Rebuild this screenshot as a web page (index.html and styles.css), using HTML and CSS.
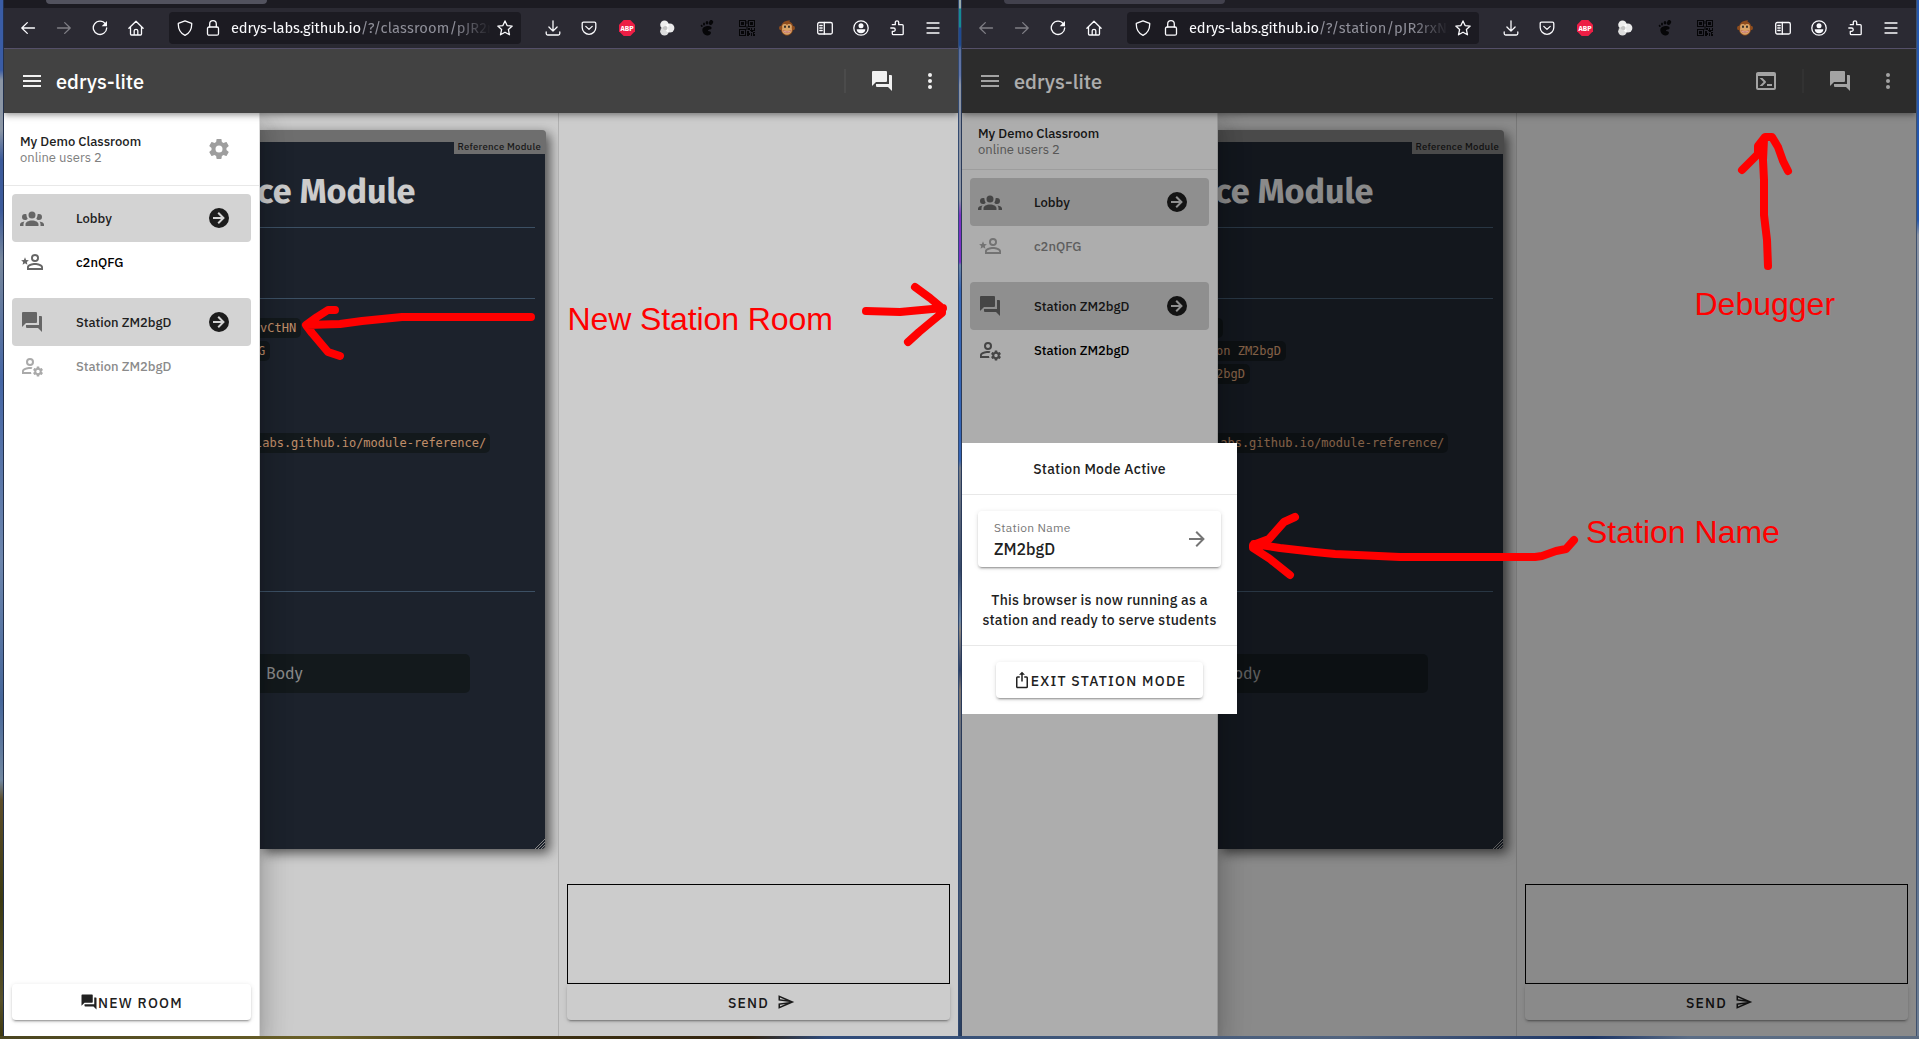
FILE: index.html
```html
<!DOCTYPE html>
<html lang="en">
<head>
<meta charset="utf-8">
<title>edrys-lite</title>
<link rel="stylesheet" href="styles.css">
</head>
<body>
<svg class="sprite" aria-hidden="true">
  <symbol id="menu" viewBox="0 0 24 24"><path d="M3,6H21V8H3V6M3,11H21V13H3V11M3,16H21V18H3V16Z"/></symbol>
  <symbol id="forum" viewBox="0 0 24 24"><path d="M17,12V3A1,1 0 0,0 16,2H3A1,1 0 0,0 2,3V17L6,13H16A1,1 0 0,0 17,12M21,6H19V15H6V17A1,1 0 0,0 7,18H18L22,22V7A1,1 0 0,0 21,6Z"/></symbol>
  <symbol id="dots" viewBox="0 0 24 24"><circle cx="12" cy="6" r="2"/><circle cx="12" cy="12" r="2"/><circle cx="12" cy="18" r="2"/></symbol>
  <symbol id="cog" viewBox="0 0 24 24"><path d="M12,15.5A3.5,3.5 0 0,1 8.5,12A3.5,3.5 0 0,1 12,8.5A3.5,3.5 0 0,1 15.5,12A3.5,3.5 0 0,1 12,15.5M19.43,12.97C19.47,12.65 19.5,12.33 19.5,12C19.5,11.67 19.47,11.34 19.43,11L21.54,9.37C21.73,9.22 21.78,8.95 21.66,8.73L19.66,5.27C19.54,5.05 19.27,4.96 19.05,5.05L16.56,6.05C16.04,5.66 15.5,5.32 14.87,5.07L14.5,2.42C14.46,2.18 14.25,2 14,2H10C9.75,2 9.54,2.18 9.5,2.42L9.13,5.07C8.5,5.32 7.96,5.66 7.44,6.05L4.95,5.05C4.73,4.96 4.46,5.05 4.34,5.27L2.34,8.73C2.21,8.95 2.27,9.22 2.46,9.37L4.57,11C4.53,11.34 4.5,11.67 4.5,12C4.5,12.33 4.53,12.65 4.57,12.97L2.46,14.63C2.27,14.78 2.21,15.05 2.34,15.27L4.34,18.73C4.46,18.95 4.73,19.03 4.95,18.95L7.44,17.94C7.96,18.34 8.5,18.68 9.13,18.93L9.5,21.58C9.54,21.82 9.75,22 10,22H14C14.25,22 14.46,21.82 14.5,21.58L14.87,18.93C15.5,18.67 16.04,18.34 16.56,17.94L19.05,18.95C19.27,19.03 19.54,18.95 19.66,18.73L21.66,15.27C21.78,15.05 21.73,14.78 21.54,14.63L19.43,12.97Z"/></symbol>
  <symbol id="group" viewBox="0 0 24 24"><path d="M12,5.5A3.5,3.5 0 0,1 15.5,9A3.5,3.5 0 0,1 12,12.5A3.5,3.5 0 0,1 8.5,9A3.5,3.5 0 0,1 12,5.5M5,8C5.56,8 6.08,8.15 6.53,8.42C6.38,9.85 6.8,11.27 7.66,12.38C7.16,13.34 6.16,14 5,14A3,3 0 0,1 2,11A3,3 0 0,1 5,8M19,8A3,3 0 0,1 22,11A3,3 0 0,1 19,14C17.84,14 16.84,13.34 16.34,12.38C17.2,11.27 17.62,9.85 17.47,8.42C17.92,8.15 18.44,8 19,8M5.5,18.25C5.5,16.18 8.41,14.5 12,14.5C15.59,14.5 18.5,16.18 18.5,18.25V20H5.5V18.25M0,20V18.5C0,17.11 1.89,15.94 4.45,15.6C3.86,16.28 3.5,17.22 3.5,18.25V20H0M24,20H20.5V18.25C20.5,17.22 20.14,16.28 19.55,15.6C22.11,15.94 24,17.11 24,18.5V20Z"/></symbol>
  <symbol id="go" viewBox="0 0 24 24"><path d="M22,12A10,10 0 0,1 12,22A10,10 0 0,1 2,12A10,10 0 0,1 12,2A10,10 0 0,1 22,12M6,13H14L10.5,16.5L11.92,17.92L17.84,12L11.92,6.08L10.5,7.5L14,11H6V13Z"/></symbol>
  <symbol id="userstar" viewBox="0 0 24 24"><path d="M15,4A4,4 0 0,0 11,8A4,4 0 0,0 15,12A4,4 0 0,0 19,8A4,4 0 0,0 15,4M15,5.9C16.16,5.9 17.1,6.84 17.1,8C17.1,9.16 16.16,10.1 15,10.1A2.1,2.1 0 0,1 12.9,8A2.1,2.1 0 0,1 15,5.9M15,13C12.33,13 7,14.33 7,17V20H23V17C23,14.33 17.67,13 15,13M15,14.9C17.97,14.9 21.1,16.36 21.1,17V18.1H8.9V17C8.9,16.36 12,14.9 15,14.9M5,13.3L7.4,14.8L6.8,12L8.9,10.2L6.1,9.9L5,7.3L3.9,9.9L1.1,10.2L3.2,12L2.6,14.8Z"/></symbol>
  <symbol id="usercog" viewBox="0 0 24 24"><path d="M10,4A4,4 0 0,0 6,8A4,4 0 0,0 10,12A4,4 0 0,0 14,8A4,4 0 0,0 10,4M10,6A2,2 0 0,1 12,8A2,2 0 0,1 10,10A2,2 0 0,1 8,8A2,2 0 0,1 10,6M10,13C7.33,13 2,14.33 2,17V20H11.5A6,6 0 0,1 11,18.1H3.9V17C3.9,16.36 7,14.9 10,14.9L11.6,15A6,6 0 0,1 12.5,13.3Z"/><use href="#cog" x="12" y="11.5" width="12" height="12"/></symbol>
  <symbol id="console" viewBox="0 0 24 24"><path d="M20,19V7H4V19H20M20,3A2,2 0 0,1 22,5V19A2,2 0 0,1 20,21H4A2,2 0 0,1 2,19V5C2,3.89 2.9,3 4,3H20M13,17V15H18V17H13M9.58,13L5.57,9H8.4L11.7,12.3C12.09,12.69 12.09,13.33 11.7,13.72L8.42,17H5.59L9.58,13Z"/></symbol>
  <symbol id="send" viewBox="0 0 24 24"><path d="M4 6.03L11.5 9.25L4 8.25V6.03M11.5 14.75L4 17.97V15.75L11.5 14.75M2 3V10L17 12L2 14V21L23 12L2 3Z"/></symbol>
  <symbol id="export" viewBox="0 0 24 24"><path d="M12,1L8,5H11V14H13V5H16M18,23H6C4.89,23 4,22.1 4,21V9A2,2 0 0,1 6,7H9V9H6V21H18V9H15V7H18A2,2 0 0,1 20,9V21A2,2 0 0,1 18,23Z"/></symbol>
  <symbol id="arrow" viewBox="0 0 24 24"><path d="M4,11V13H16L10.5,18.5L11.92,19.92L19.84,12L11.92,4.08L10.5,5.5L16,11H4Z"/></symbol>

  <symbol id="b-back" viewBox="0 0 16 16"><path class="ln" d="M14.5 8H2M7.3 2.6L1.8 8l5.5 5.4"/></symbol>
  <symbol id="b-fwd" viewBox="0 0 16 16"><path class="ln" d="M1.5 8H14M8.7 2.6L14.2 8l-5.5 5.4"/></symbol>
  <symbol id="b-reload" viewBox="0 0 16 16"><path class="ln" d="M13.4 3.8A6.7 6.7 0 1 0 14.7 8"/><path d="M15 1v5.3H9.7z"/></symbol>
  <symbol id="b-home" viewBox="0 0 16 16"><path class="ln" d="M.9 8.3L8 1.3l7.1 7M2.5 7v7c0 .6.4 1 1 1h9c.6 0 1-.4 1-1V7M6.2 15v-4.2c0-1 .6-1.500 1.800-1.500s1.800.5 1.800 1.500V15"/></symbol>
  <symbol id="b-shield" viewBox="0 0 16 16"><path class="ln" d="M8 .8L14.700 3.400c.2 5-1.200 9.200-6.700 11.900C2.500 12.600 1.100 8.400 1.300 3.400z"/></symbol>
  <symbol id="b-lock" viewBox="0 0 16 16"><rect class="ln" x="2.500" y="7" width="11" height="8.200" rx="1.500"/><path class="ln" d="M4.700 7V4a3.300 3.300 0 0 1 6.600 0v3"/></symbol>
  <symbol id="b-star" viewBox="0 0 16 16"><path class="ln" d="M8 .9l2.100 4.700 5.100.5-3.800 3.500 1.100 5.200L8 12.200l-4.500 2.600 1.100-5.200L.8 6.100l5.100-.5z"/></symbol>
  <symbol id="b-down" viewBox="0 0 16 16"><path class="ln" d="M8 .8V11M3.900 7L8 11.100 12.100 7M1.200 12v1.500c0 .9.600 1.500 1.500 1.500h10.600c.9 0 1.500-.6 1.500-1.500V12"/></symbol>
  <symbol id="b-pocket" viewBox="0 0 16 16"><path class="ln" d="M2.500 2.200h11c.8 0 1.300.5 1.300 1.300v4a6.800 6.800 0 0 1-13.600 0v-4c0-.8.5-1.300 1.300-1.300zM4.800 6.400L8 9.400l3.200-3"/></symbol>
  <symbol id="b-abp" viewBox="0 0 16 16"><path d="M4.700 0h6.600L16 4.700v6.600L11.300 16H4.700L0 11.300V4.700z" fill="#ed1e45"/><text x="8" y="10.600" class="abp">ABP</text></symbol>
  <symbol id="b-balls" viewBox="0 0 16 16"><circle cx="5.500" cy="4.800" r="4.300" fill="#eee"/><circle cx="5.500" cy="11.200" r="4.300" fill="#ddd"/><circle cx="10.800" cy="8" r="4.600" fill="#fff" fill-opacity=".9"/><path d="M3.500 8a3 3 0 0 1 4.500-1.500 3 3 0 0 1 0 3A3 3 0 0 1 3.500 8z" fill="#c4c4c4"/></symbol>
  <symbol id="b-foot" viewBox="0 0 16 16"><g fill="#060608"><ellipse cx="12" cy="2.500" rx="2" ry="2.600" transform="rotate(25 12 2.500)"/><ellipse cx="8" cy="2.800" rx="1.300" ry="1.800"/><ellipse cx="5" cy="4" rx="1" ry="1.500"/><ellipse cx="2.700" cy="5.900" rx=".9" ry="1.200" transform="rotate(-25 2.700 5.900)"/><path d="M8 6c3-.4 5.200.7 4.500 2.500-.6 1.500-3.600.8-3.600 2 0 1 3.300.2 3 2.600-.2 1.700-2 2.700-4 2.400C4.900 15 3.400 12.200 3.300 10 3.300 7.500 5.500 6.300 8 6z"/></g></symbol>
  <symbol id="b-qr" viewBox="0 0 16 16"><g fill="#050507"><path fill-rule="evenodd" d="M0 0h7v7H0zM1 1v5h5V1zM9 0h7v7H9zM10 1v5h5V1zM0 9h7v7H0zM1 10v5h5v-5z"/><path d="M2 2h3v3H2zM11 2h3v3h-3zM2 11h3v3H2zM7.500 1h1v3h-1zM7.500 6h1v4h-1zM9 8h2v2H9zM12 8h1v2h2V8h1v3h-2v1h-2v-1h-1v-1h1zM8 11h2v2h1v2h-1v1H8zM12 13h1v3h-1zM14 12h2v1h-1v1h1v2h-2z"/></g></symbol>
  <symbol id="b-monkey" viewBox="0 0 16 16"><circle cx="2.200" cy="8" r="2.200" fill="#8f4d1e"/><circle cx="13.800" cy="8" r="2.200" fill="#8f4d1e"/><path d="M8 .8l3-.6-.6 1.300C14 3 14.300 6 14 9.500 13.700 13 11 15.500 8 15.500S2.300 13 2 9.500C1.700 5 3.500 1.500 8 .8z" fill="#8f4d1e"/><path d="M5.500 4C7 4 7.600 4.500 8 5c.4-.5 1-1 2.500-1 2 0 2.800 2 2.200 4 1 3-.7 6.700-4.700 6.700S2.300 11 3.300 8c-.6-2 .2-4 2.200-4z" fill="#d9a468"/><ellipse cx="6" cy="6.800" rx=".9" ry="1.200" fill="#222"/><ellipse cx="10" cy="6.800" rx=".9" ry="1.200" fill="#222"/><path d="M4.200 10.500c2 1.300 5.600 1.300 7.600 0-.5 2.800-7.100 2.800-7.600 0z" fill="#fff" stroke="#a33" stroke-width=".5"/></symbol>
  <symbol id="b-side" viewBox="0 0 16 16"><rect class="ln" x=".7" y="2.500" width="14.600" height="11.500" rx="1.500"/><path class="ln" d="M7.300 2.500V14M2.800 5.500h2.400M2.800 8h2.400M2.800 10.500h2.400"/></symbol>
  <symbol id="b-user" viewBox="0 0 16 16"><circle class="ln" cx="8" cy="8" r="7.200"/><circle cx="8" cy="5.800" r="2.500"/><path d="M3.700 9.300h8.600c0 2.500-1.800 4-4.300 4s-4.300-1.500-4.300-4z"/></symbol>
  <symbol id="b-ext" viewBox="0 0 16 16"><path class="ln" d="M3.300 4.700h3V2.300c0-2 3.400-2 3.400 0v2.400h3.500c.7 0 1 .4 1 1v8c0 .6-.3 1-1 1H4.300c-.6 0-1-.4-1-1v-2.400h1.200c2.300 0 2.300-3.300 0-3.300H1.800"/></symbol>
  <symbol id="b-menu" viewBox="0 0 16 16"><path class="ln" d="M2 3h12M2 8h12M2 13h12"/></symbol>
</svg>

<div class="desktop">
  <div class="strip strip-left"></div>

  <section class="window">
    <div class="tabs"><div class="tab"></div></div>
    <nav class="toolbar">
      <div class="nav-buttons">
        <svg><use href="#b-back"/></svg><svg class="off"><use href="#b-fwd"/></svg><svg><use href="#b-reload"/></svg><svg><use href="#b-home"/></svg>
      </div>
      <div class="urlbar">
        <svg><use href="#b-shield"/></svg><svg class="lock"><use href="#b-lock"/></svg>
        <div class="url"><span class="host">edrys-labs.github.io</span><span class="path">/?/classroom/pJR2rxN</span></div>
        <svg><use href="#b-star"/></svg>
      </div>
      <div class="extensions">
        <svg><use href="#b-down"/></svg><svg><use href="#b-pocket"/></svg><svg><use href="#b-abp"/></svg><svg><use href="#b-balls"/></svg><svg><use href="#b-foot"/></svg><svg><use href="#b-qr"/></svg><svg><use href="#b-monkey"/></svg><svg><use href="#b-side"/></svg><svg><use href="#b-user"/></svg><svg><use href="#b-ext"/></svg><svg><use href="#b-menu"/></svg>
      </div>
    </nav>
    <div class="app">
      <header class="appbar">
        <svg class="icon"><use href="#menu"/></svg>
        <h1>edrys-lite</h1>
        <div class="divider"></div>
        <svg class="icon chat-toggle"><use href="#forum"/></svg>
        <svg class="icon"><use href="#dots"/></svg>
      </header>
      <div class="content">
        <aside class="drawer">
          <div class="class-head">
            <div><div class="class-name">My Demo Classroom</div><div class="online">online users 2</div></div>
            <svg class="icon"><use href="#cog"/></svg>
          </div>
          <div class="rooms">
            <div class="room"><svg class="icon"><use href="#group"/></svg><span>Lobby</span><svg class="icon go"><use href="#go"/></svg></div>
            <div class="member me"><svg class="icon"><use href="#userstar"/></svg><span>c2nQFG</span></div>
            <div class="room"><svg class="icon"><use href="#forum"/></svg><span>Station ZM2bgD</span><svg class="icon go"><use href="#go"/></svg></div>
            <div class="member away"><svg class="icon"><use href="#usercog"/></svg><span>Station ZM2bgD</span></div>
          </div>
          <button class="btn new-room"><svg class="btn-icon"><use href="#forum"/></svg>NEW ROOM</button>
        </aside>
        <main class="stage dim">
          <article class="module">
            <div class="module-body">
              <div class="module-label">Reference Module</div>
              <h2>ce Module</h2>
              <div class="block-a"></div>
              <div class="block-b">
                <div><code>vCtHN</code></div>
                <div><code class="pulled">G</code></div>
                <div class="url-row"><code class="cut">labs.github.io/module-reference/</code></div>
              </div>
              <div class="field">Body</div>
              <svg class="grip" viewBox="0 0 10 10"><path d="M0 10L10 0M3 10L10 3M6 10L10 6"/></svg>
            </div>
          </article>
        </main>
        <aside class="chat dim">
          <textarea></textarea>
          <button class="btn send">SEND<svg class="send-icon"><use href="#send"/></svg></button>
        </aside>
      </div>
    </div>
  </section>

  <div class="strip strip-mid"></div>

  <section class="window unfocused">
    <div class="tabs"><div class="tab"></div></div>
    <nav class="toolbar">
      <div class="nav-buttons">
        <svg class="off"><use href="#b-back"/></svg><svg class="off"><use href="#b-fwd"/></svg><svg><use href="#b-reload"/></svg><svg><use href="#b-home"/></svg>
      </div>
      <div class="urlbar">
        <svg><use href="#b-shield"/></svg><svg class="lock"><use href="#b-lock"/></svg>
        <div class="url"><span class="host">edrys-labs.github.io</span><span class="path">/?/station/pJR2rxNzh</span></div>
        <svg><use href="#b-star"/></svg>
      </div>
      <div class="extensions">
        <svg><use href="#b-down"/></svg><svg><use href="#b-pocket"/></svg><svg><use href="#b-abp"/></svg><svg><use href="#b-balls"/></svg><svg><use href="#b-foot"/></svg><svg><use href="#b-qr"/></svg><svg><use href="#b-monkey"/></svg><svg><use href="#b-side"/></svg><svg><use href="#b-user"/></svg><svg><use href="#b-ext"/></svg><svg><use href="#b-menu"/></svg>
      </div>
    </nav>
    <div class="app">
      <header class="appbar">
        <svg class="icon"><use href="#menu"/></svg>
        <h1>edrys-lite</h1>
        <svg class="icon debug"><use href="#console"/></svg>
        <div class="divider"></div>
        <svg class="icon chat-toggle"><use href="#forum"/></svg>
        <svg class="icon"><use href="#dots"/></svg>
      </header>
      <div class="content">
        <aside class="drawer">
          <div class="class-head compact">
            <div><div class="class-name">My Demo Classroom</div><div class="online">online users 2</div></div>
          </div>
          <div class="rooms">
            <div class="room"><svg class="icon"><use href="#group"/></svg><span>Lobby</span><svg class="icon go"><use href="#go"/></svg></div>
            <div class="member away"><svg class="icon"><use href="#userstar"/></svg><span>c2nQFG</span></div>
            <div class="room"><svg class="icon"><use href="#forum"/></svg><span>Station ZM2bgD</span><svg class="icon go"><use href="#go"/></svg></div>
            <div class="member me"><svg class="icon"><use href="#usercog"/></svg><span>Station ZM2bgD</span></div>
          </div>
        </aside>
        <main class="stage dim">
          <article class="module">
            <div class="module-body">
              <div class="module-label">Reference Module</div>
              <h2>ce Module</h2>
              <div class="block-a"></div>
              <div class="block-b">
                <div><code class="stub"></code></div>
                <div><code class="pulled">on ZM2bgD</code></div>
                <div><code class="pulled">2bgD</code></div>
                <div class="url-row third"><code class="cut">labs.github.io/module-reference/</code></div>
              </div>
              <div class="field">Body</div>
              <svg class="grip" viewBox="0 0 10 10"><path d="M0 10L10 0M3 10L10 3M6 10L10 6"/></svg>
            </div>
          </article>
        </main>
        <aside class="chat dim">
          <textarea></textarea>
          <button class="btn send">SEND<svg class="send-icon"><use href="#send"/></svg></button>
        </aside>
      </div>
      <div class="scrim"></div>
      <div class="dialog">
        <div class="dialog-title">Station Mode Active</div>
        <div class="dialog-body">
          <div class="name-field">
            <div><div class="name-label">Station Name</div><div class="name-value">ZM2bgD</div></div>
            <svg class="icon"><use href="#arrow"/></svg>
          </div>
          <p>This browser is now running as a<br>station and ready to serve students</p>
        </div>
        <div class="dialog-actions"><button class="btn exit"><svg class="btn-icon"><use href="#export"/></svg>EXIT STATION MODE</button></div>
      </div>
    </div>
  </section>

  <div class="strip strip-right"></div>

  <div class="annotations">
    <svg viewBox="0 0 1919 1039">
      <path d="M531 317H402L362 321L340 324L307 325M335 310H328L317 317L306 325L312 333L328 352L340 356"/>
      <path d="M866 311L900 312L943 308M915 287L930 298L942 308V313L931 322L919 332L908 342"/>
      <path d="M1768 266L1767 240L1764 215V180L1763 160L1764 139M1742 170L1758 154V146L1765 137H1772L1778 147L1783 161L1788 171"/>
      <path d="M1574 540L1566 549L1556 551L1542 556L1535 557H1400L1335 554L1315 552L1280 548L1254 544M1295 517L1284 522L1269 539L1253 545V548L1270 559L1290 575"/>
    </svg>
    <span class="note room-note">New Station Room</span>
    <span class="note debug-note">Debugger</span>
    <span class="note name-note">Station Name</span>
  </div>
</div>
</body>
</html>
```
FILE: styles.css
```css
* { box-sizing: border-box; }

body {
  margin: 0;
  overflow: hidden;
  font-family: "IBM Plex Sans", Roboto, sans-serif;
  font-weight: 500;
  color: #212121;
}

.sprite { position: absolute; width: 0; height: 0; }
.ln { fill: none; stroke: currentColor; stroke-width: 1.3; stroke-linecap: round; stroke-linejoin: round; }
.abp { font: bold 7.2px "Fira Sans", Roboto, sans-serif; fill: #fff; text-anchor: middle; }
svg { fill: currentColor; flex: none; display: block; }

/* desktop */
.desktop {
  position: relative;
  display: grid;
  grid-template-columns: 4px 954px 4px 954px 3px;
  grid-template-rows: 1036px 3px;
  height: 1039px;
  background: linear-gradient(90deg, #4a4520 0, #6b6128 17%, #3e3212 27%, #33240f 39%, #2e4a7a 43%, #3a5378 52%, #52647f 70%, #1c3566 83%, #5b6d86 88%, #5b6b80 100%);
}
.strip-left { background: linear-gradient(#3a5ca5 0 70px, #8b96a5 80px 130px, #3c5b9b 160px 210px, #77879c 260px, #4566a5 380px, #6d86ad 560px, #46679b 700px, #7288a0 780px, #5d4d2a 800px, #3c3a12 900px, #57502a 1000px, #3f390f); border-right: 1px solid #22304b; }
.strip-mid { background: linear-gradient(#9aa 0 8px, #158c93 9px 27px, #204a91 28px 45px, #5e7099 50px, #6174a8 75px, #8b93a3 85px 200px, #7b31c4 215px 262px, #6f85a5 265px, #3565b5 290px 460px, #777d88 468px, #364869 570px, #6a87a9 620px, #8c8680 630px, #2c4068 670px, #7c7470 690px, #4d6689 780px, #39547a 860px, #4c5b70 920px, #263d60); border-left: 1px solid #334a70; border-right: 1px solid #2a3a58; }
.strip-right { background: linear-gradient(#2457ad 0, #2457ad 220px, #8b94a4 235px, #7c8da5 500px, #5a7192 800px, #6f7f93 1036px); border-left: 1px solid #3f506c; }

/* browser chrome */
.window { display: flex; flex-direction: column; min-width: 0; background: #2b2a33; overflow: hidden; }
.tabs { height: 8px; background: #1c1b22; padding-left: 42px; }
.tab { width: 221px; height: 4px; border-radius: 0 0 4px 4px; background: #52525e; }
.unfocused .tabs { background: #1f1e25; }
.unfocused .tab { background: #42414d; }
.toolbar { display: flex; align-items: center; height: 41px; border-bottom: 1px solid #5b5670; color: #fbfbfe; }
.toolbar svg { width: 16px; height: 16px; }
.nav-buttons { display: flex; gap: 20px; padding-left: 16px; width: 165px; }
.off { opacity: .4; }
.urlbar { display: flex; align-items: center; width: 352px; height: 32px; padding: 0 8px; border-radius: 4px; background: #1c1b22; }
.urlbar .lock { margin-left: 12px; }
.url {
  width: 260px; height: 22px; margin: 0 6px 0 10px;
  overflow: hidden; white-space: nowrap;
  font: 400 14.700px/22px "Fira Sans", Roboto, sans-serif;
  -webkit-mask-image: linear-gradient(90deg, #000 86%, transparent 100%);
  mask-image: linear-gradient(90deg, #000 86%, transparent 100%);
}
.path { color: #8f8f99; letter-spacing: .15px; }
.host { letter-spacing: -.13px; }
.extensions { display: flex; padding-left: 24px; gap: 20px; }
.extensions svg:nth-child(n+3):nth-child(-n+7) { margin: 0 2px; }

/* application */
.app { position: relative; flex: 1; display: flex; flex-direction: column; }
.icon { width: 24px; height: 24px; }
.appbar { position: relative; z-index: 4; display: flex; align-items: center; height: 64px; padding: 0 16px; background: #424242; color: #f1f1f1; box-shadow: 0 2px 4px -1px rgba(0,0,0,.2), 0 4px 5px rgba(0,0,0,.14), 0 1px 10px rgba(0,0,0,.12); }
.appbar h1 { flex: 1; margin: 0 0 0 12px; padding-top: 2px; font-size: 20px; font-weight: 500; line-height: 26px; color: #fff; }
.divider { width: 2px; height: 24px; margin: 0 24px; background: #4b4b4b; }
.chat-toggle { margin-right: 24px; }
.content { flex: 1; display: flex; background: #fff; }

.drawer { position: relative; z-index: 3; display: flex; flex-direction: column; width: 256px; padding-bottom: 16px; border-right: 1px solid #ddd; background: #fff; box-shadow: 0 8px 10px -5px rgba(0,0,0,.2), 0 16px 24px 2px rgba(0,0,0,.14), 0 6px 30px 5px rgba(0,0,0,.12); }
.class-head { display: flex; justify-content: space-between; align-items: center; height: 73px; padding: 0 28px 0 16px; border-bottom: 1px solid #e8e8e8; }
.class-head.compact { height: 57px; }
.class-head > div { padding-top: 1px; }
.class-head .icon { color: #9e9e9e; }
.class-name { font-size: 13px; line-height: 16px; }
.online { font-size: 13px; font-weight: 400; line-height: 16px; color: #808080; }
.rooms { flex: 1; padding: 8px; font-size: 13px; }
.room, .member { display: flex; align-items: center; padding: 0 20px 0 8px; }
.room { height: 48px; border-radius: 4px; background: #d3d3d3; }
.room span, .member span { flex: 1; margin-left: 32px; }
.room > .icon:first-child { color: #666; }
.room .go { color: #1c1c1c; }
.member { height: 40px; margin-bottom: 16px; }
.member.me { color: #000; }
.member.me .icon { color: #666; }
.member.away { color: #8b8b8b; }
.member.away .icon { color: #aaa; }

.btn { display: flex; align-items: center; justify-content: center; height: 36px; padding: 2px 0 0; border: 0; border-radius: 4px; background: #fff; color: #212121; font: 500 14px "IBM Plex Sans", Roboto, sans-serif; letter-spacing: 1.250px; box-shadow: 0 3px 1px -2px rgba(0,0,0,.2), 0 2px 2px rgba(0,0,0,.14), 0 1px 5px rgba(0,0,0,.12); }
.btn svg { margin-top: -2px; }
.btn-icon { width: 18px; height: 18px; }
.new-room { margin: 0 8px; }
.send { padding-left: 6px; }

.dim { position: relative; }
.dim::after { content: ""; position: absolute; inset: 0 0 0 -1px; background: rgba(0,0,0,.2); pointer-events: none; }
.stage { width: 298px; padding-top: 17px; background: #fff; }
.stage::after { right: 0; left: 0; }
.module { width: 286px; height: 719px; padding: 12px 1px 0 0; border-radius: 0 4px 4px 0; background: #8a8a8a; box-shadow: 4px 4px 12px rgba(0,0,0,.6); }
.module-body { position: relative; height: 707px; padding-right: 10px; border-radius: 0 0 4px 0; background: #232b38; overflow: hidden; }
.module-label { width: 91px; height: 12px; margin: 0 -10px 0 auto; padding-right: 4px; background: #8a8a8a; font-size: 9.600px; line-height: 10px; letter-spacing: .25px; text-align: right; color: #222; white-space: nowrap; }
h2 { margin: 18px 0 0 -3px; font: 700 34.200px/40px "Fira Sans", Roboto, sans-serif; color: #fff; white-space: nowrap; }
.block-a { height: 72px; margin-top: 15px; border: solid #4b647d; border-width: 1px 0; }
.block-b { height: 293px; padding-top: 17px; border-bottom: 1px solid #4b647d; }
.block-b > div { height: 23px; padding-top: 2px; }
code { display: inline-block; height: 20px; padding: 0 5px 0 0; border-radius: 0 5px 5px 0; background: #182024; color: #eeb284; font: 400 12px/21px "DejaVu Sans Mono", monospace; vertical-align: top; }
.block-b .cut { margin-left: -5px; padding-right: 4px; }
code.stub { width: 5px; padding: 0; }
code.pulled { margin-left: -2px; }
.block-b .url-row { margin-top: 69px; }
.block-b .url-row.third { margin-top: 46px; }
.field { width: 210px; height: 39px; margin-top: 62px; padding-left: 6px; border-radius: 0 5px 5px 0; background: #182024; color: #aaa; font: 400 16px/40px "Fira Sans", "Noto Sans", sans-serif; }
.grip { position: absolute; right: 0; bottom: 0; width: 10px; height: 10px; stroke: #aaa; fill: none; }

.chat { flex: 1; display: flex; flex-direction: column; justify-content: flex-end; padding: 0 8px 16px; border-left: 1px solid #ddd; background: #fff; }
.chat textarea { display: block; height: 100px; border: 1px solid #000; background: transparent; resize: none; outline: 0; }
.send-icon { width: 18px; height: 18px; margin-left: 8px; }

/* modal */
.scrim { position: absolute; inset: 0; z-index: 5; background: rgba(0,0,0,.32); }
.dialog { position: absolute; z-index: 6; left: 0; top: 394px; width: 275px; height: 271px; background: #fff; }
.dialog-title { height: 52px; border-bottom: 1px solid #e8e8e8; font-size: 14px; line-height: 52px; letter-spacing: .25px; text-align: center; }
.dialog-body { height: 151px; padding: 16px 16px 0; border-bottom: 1px solid #e8e8e8; }
.name-field { display: flex; align-items: center; justify-content: space-between; height: 56px; padding: 0 12px 0 16px; border-radius: 4px; box-shadow: 0 3px 1px -2px rgba(0,0,0,.2), 0 2px 2px rgba(0,0,0,.14), 0 1px 5px rgba(0,0,0,.12); }
.name-field .icon { color: #757575; }
.name-label { padding-top: 1px; font-size: 12px; line-height: 18px; letter-spacing: .3px; font-weight: 400; color: #777; }
.name-value { font-size: 16px; line-height: 24px; }
.dialog p { margin: 23px -10px 0; font-size: 14px; line-height: 20px; letter-spacing: .25px; text-align: center; white-space: nowrap; }
.dialog-actions { padding: 16px 34px; }
.exit { width: 207px; }

/* hand-drawn notes over the desktop */
.annotations { position: absolute; inset: 0; z-index: 10; pointer-events: none; color: #f00; }
.annotations svg { width: 1919px; height: 1039px; fill: none; stroke: #f00; stroke-width: 8; stroke-linecap: round; stroke-linejoin: round; }
.note { position: absolute; font: 400 32px/36px "Liberation Sans", sans-serif; white-space: nowrap; }
.room-note { left: 567.500px; top: 301px; letter-spacing: -.1px; }
.debug-note { left: 1694.500px; top: 286px; }
.name-note { left: 1586px; top: 514px; }
```
